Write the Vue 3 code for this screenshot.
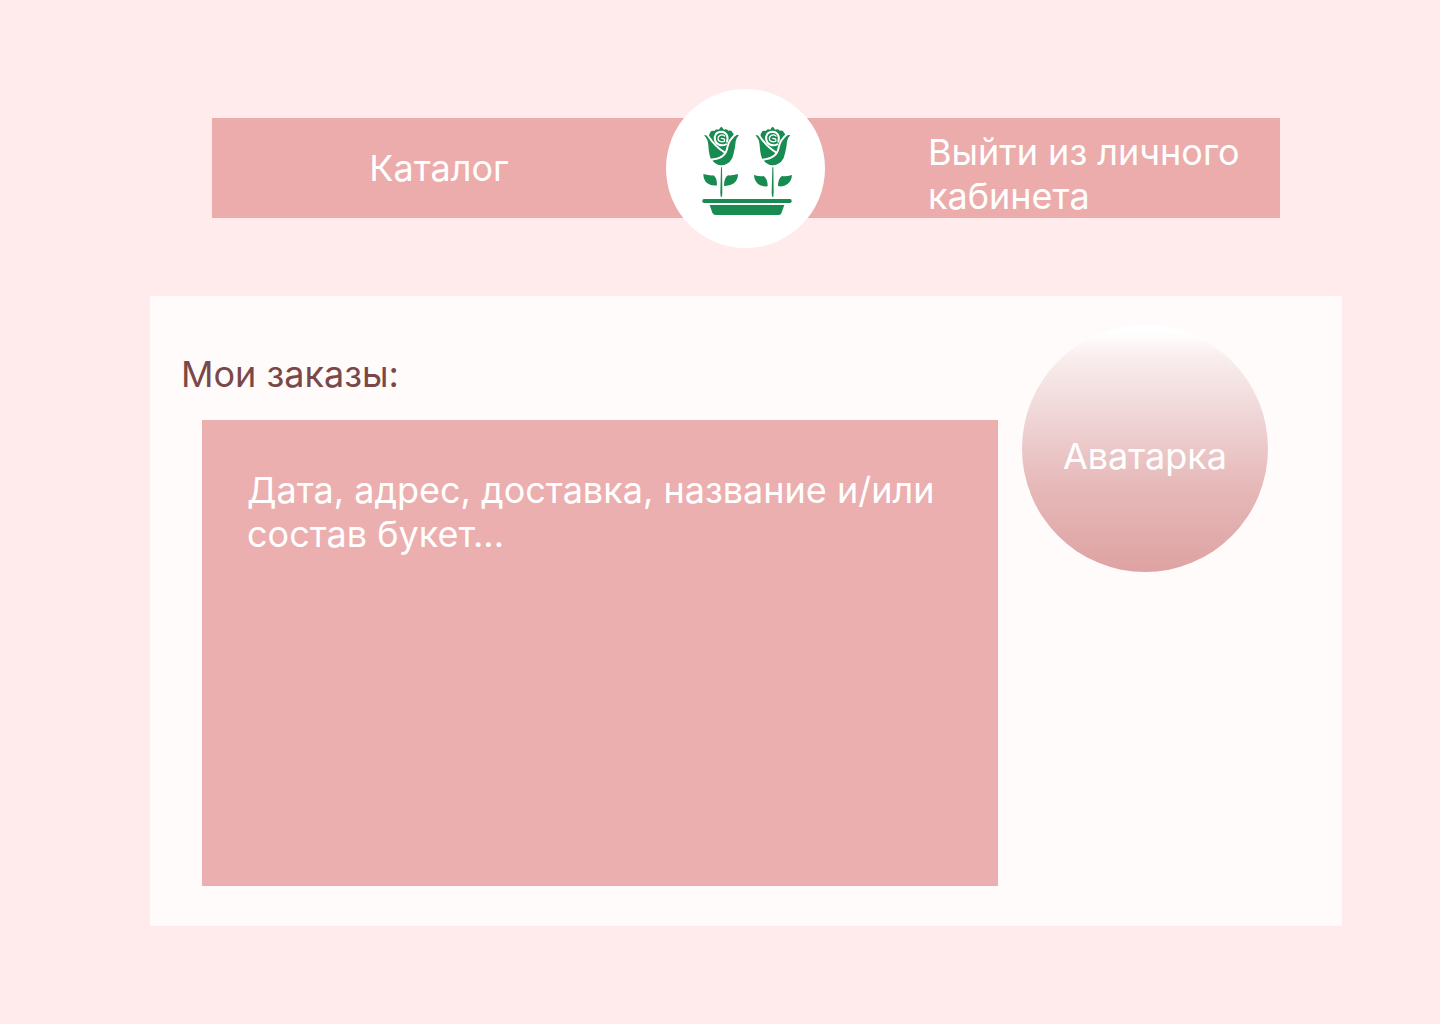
<script setup>
const roseOffsets = [0, 154]
const order = 'Дата, адрес, доставка, название и/или состав букет...'
</script>

<template>
  <div class="page">
    <header class="header">
      <nav class="bar">
        <a class="link catalog" href="#catalog">Каталог</a>
        <a class="logo" href="#home" aria-label="Главная">
          <svg viewBox="18 15 477 477" aria-hidden="true">
            <g v-for="x in roseOffsets" :key="x" :transform="`translate(${x} 0)`">
              <path
                class="green"
                d="M132 154 Q140 152 147 157 Q147 149 150 147 Q152 138 163 141 Q168 133 177 137 Q179 131 184 128 Q189 131 191 137 Q200 133 205 140 Q215 137 218 146 Q222 149 221 156 Q228 152 237 153 Q230 160 227 172 Q226 190 221 208 Q216 241 184 244 Q153 241 149 214 Q146 202 145 184 Q144 165 132 154Z"
              />
              <path class="line" d="M140 149 C151 164 160 185 194 205" />
              <path class="line" d="M229 149 C215 160 205 174 202 190 C199 212 184 225 151 227" />
              <path class="line clear" d="M145 226 L158 229 L174 243 L158 246 L145 236Z" />
              <path class="green" d="M158 231 Q177 230 195 220 L214 222 Q205 243 184 244 Q169 243 158 231Z" />
              <path
                class="line"
                d="M201 173 C206 157 199 144 184 143 C169 143 162 154 165 168 C168 182 184 188 198 181"
              />
              <path class="line thin" d="M194 156 C184 149 174 155 174 164 C174 172 184 175 193 172 C196 165 191 163 184 163" />
              <path class="green" d="M183 250 H186 L187 325 L186 338 H182 L181 325Z" />
            </g>
            <path class="green" d="M130 270 Q148 275 160 274 Q171 280 171 304 Q155 307 142 298 Q130 289 130 270Z" />
            <path class="green" d="M234 270 Q216 275 204 274 Q192 281 192 306 Q209 307 222 298 Q234 288 234 270Z" />
            <path class="green" d="M282 273 Q299 278 311 276 Q323 284 323 307 Q306 309 294 300 Q283 290 282 273Z" />
            <path class="green" d="M396 273 Q378 278 366 276 Q354 284 354 306 Q370 310 383 300 Q395 290 396 273Z" />
            <rect class="green" x="127" y="345" width="268" height="12" rx="5" />
            <path class="green" d="M149 363 H373 L364 388 Q362 393 356 393 H168 Q160 393 157 386Z" />
          </svg>
        </a>
        <a class="link logout" href="#logout">Выйти из личного кабинета</a>
      </nav>
    </header>

    <main class="account">
      <section class="orders" aria-labelledby="orders-title">
        <h1 id="orders-title" class="title">Мои заказы:</h1>
        <p class="order">{{ order }}</p>
      </section>
      <div class="avatar">Аватарка</div>
    </main>
  </div>
</template>

<style>
body {
  margin: 0;
  background: #ffebeb;
}
</style>

<style scoped>
.page {
  box-sizing: border-box;
  min-height: 100vh;
  padding: 88px 98px 98px 150px;
  background: #ffebeb;
  color: #fff;
  font-family: Inter, "Liberation Sans", sans-serif;
  font-size: 36px;
  font-weight: 400;
  line-height: 44px;
}

.header {
  padding: 30px 62px 78px;
}

.bar {
  display: grid;
  grid-template-columns: 1fr 160px 1fr;
  align-items: center;
  height: 100px;
  background: #ecacac;
}

.link {
  color: inherit;
  text-decoration: none;
}

.catalog {
  justify-self: center;
}

.logo {
  display: block;
  width: 159px;
  height: 159px;
  margin: -29px 0 -30px;
  border-radius: 50%;
  background: #fff;
}

.logo svg {
  display: block;
  width: 100%;
  height: 100%;
}

.green {
  fill: #188b50;
}

.line {
  fill: none;
  stroke: #fff;
  stroke-width: 6;
  stroke-linecap: round;
}

.thin {
  stroke-width: 4;
}

.clear {
  fill: #fff;
  stroke: none;
}

.logout {
  align-self: end;
  padding: 0 24px 0 102px;
}

.account {
  display: grid;
  grid-template-columns: 1fr 246px;
  column-gap: 24px;
  align-items: start;
  padding: 29px 74px 40px 31px;
  background: #fffbfa;
}

.orders {
  padding-top: 27px;
}

.title {
  margin: 0 0 24px;
  color: #7a4848;
  font: inherit;
}

.order {
  box-sizing: border-box;
  min-height: 466px;
  margin: 0 0 0 21px;
  padding: 48px 45px;
  background: #ebafaf;
}

.avatar {
  box-sizing: border-box;
  display: grid;
  place-items: center;
  height: 247px;
  padding-top: 14px;
  border-radius: 50%;
  background: linear-gradient(#fff 3%, #f9eeed 13%, #efd4d5 38%, #e6b8b8 66%, #dfa2a2);
}
</style>
